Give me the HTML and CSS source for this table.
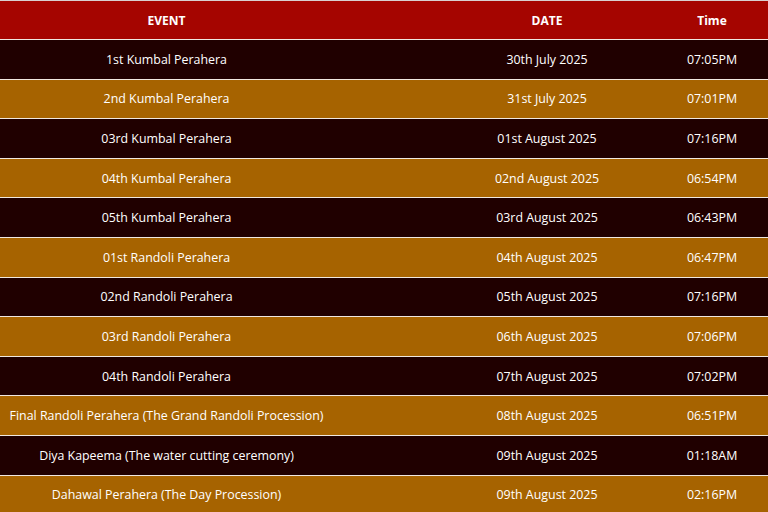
FILE: index.html
```html
<!DOCTYPE html>
<html>
<head>
<meta charset="utf-8">
<link rel="stylesheet" href="styles.css">
</head>
<body>
<table class="schedule">
  <colgroup>
    <col class="c-event">
    <col class="c-date">
    <col class="c-time">
  </colgroup>
  <thead>
    <tr><th>EVENT</th><th class="date">DATE</th><th class="time">Time</th></tr>
  </thead>
  <tbody>
    <tr class="dark"><td>1st Kumbal Perahera</td><td class="date">30th July 2025</td><td class="time">07:05PM</td></tr>
    <tr class="gold"><td>2nd Kumbal Perahera</td><td class="date">31st July 2025</td><td class="time">07:01PM</td></tr>
    <tr class="dark"><td>03rd Kumbal Perahera</td><td class="date">01st August 2025</td><td class="time">07:16PM</td></tr>
    <tr class="gold"><td>04th Kumbal Perahera</td><td class="date">02nd August 2025</td><td class="time">06:54PM</td></tr>
    <tr class="dark"><td>05th Kumbal Perahera</td><td class="date">03rd August 2025</td><td class="time">06:43PM</td></tr>
    <tr class="gold"><td>01st Randoli Perahera</td><td class="date">04th August 2025</td><td class="time">06:47PM</td></tr>
    <tr class="dark"><td>02nd Randoli Perahera</td><td class="date">05th August 2025</td><td class="time">07:16PM</td></tr>
    <tr class="gold"><td>03rd Randoli Perahera</td><td class="date">06th August 2025</td><td class="time">07:06PM</td></tr>
    <tr class="dark"><td>04th Randoli Perahera</td><td class="date">07th August 2025</td><td class="time">07:02PM</td></tr>
    <tr class="gold"><td>Final Randoli Perahera (The Grand Randoli Procession)</td><td class="date">08th August 2025</td><td class="time">06:51PM</td></tr>
    <tr class="dark"><td>Diya Kapeema (The water cutting ceremony)</td><td class="date">09th August 2025</td><td class="time">01:18AM</td></tr>
    <tr class="gold"><td>Dahawal Perahera (The Day Procession)</td><td class="date">09th August 2025</td><td class="time">02:16PM</td></tr>
  </tbody>
</table>
</body>
</html>
```
FILE: styles.css
```css
html, body {
  margin: 0;
  padding: 0;
  background: #ffffff;
}
body {
  font-family: "Open Sans", "Liberation Sans", sans-serif;
  color: #ffffff;
}
.schedule {
  width: 768px;
  border-collapse: collapse;
  table-layout: fixed;
  border-top: 1px solid #d8d0d0;
}
.c-event { width: 333px; }
.c-date { width: 334px; }
.c-time { width: 101px; }
.schedule th,
.schedule td {
  text-align: center;
  padding: 0;
  white-space: nowrap;
  border-bottom: 1px solid #f0e8e0;
}
.schedule th {
  background: #a50500;
  height: 38px;
  font-size: 12px;
  font-weight: 700;
}
.schedule td {
  height: 38.6px;
  font-size: 12.4px;
}
.schedule .date {
  padding-left: 94px;
}
.schedule .time {
  padding-right: 11px;
}
.dark td { background: #200000; }
.gold td { background: #a66300; }
```
